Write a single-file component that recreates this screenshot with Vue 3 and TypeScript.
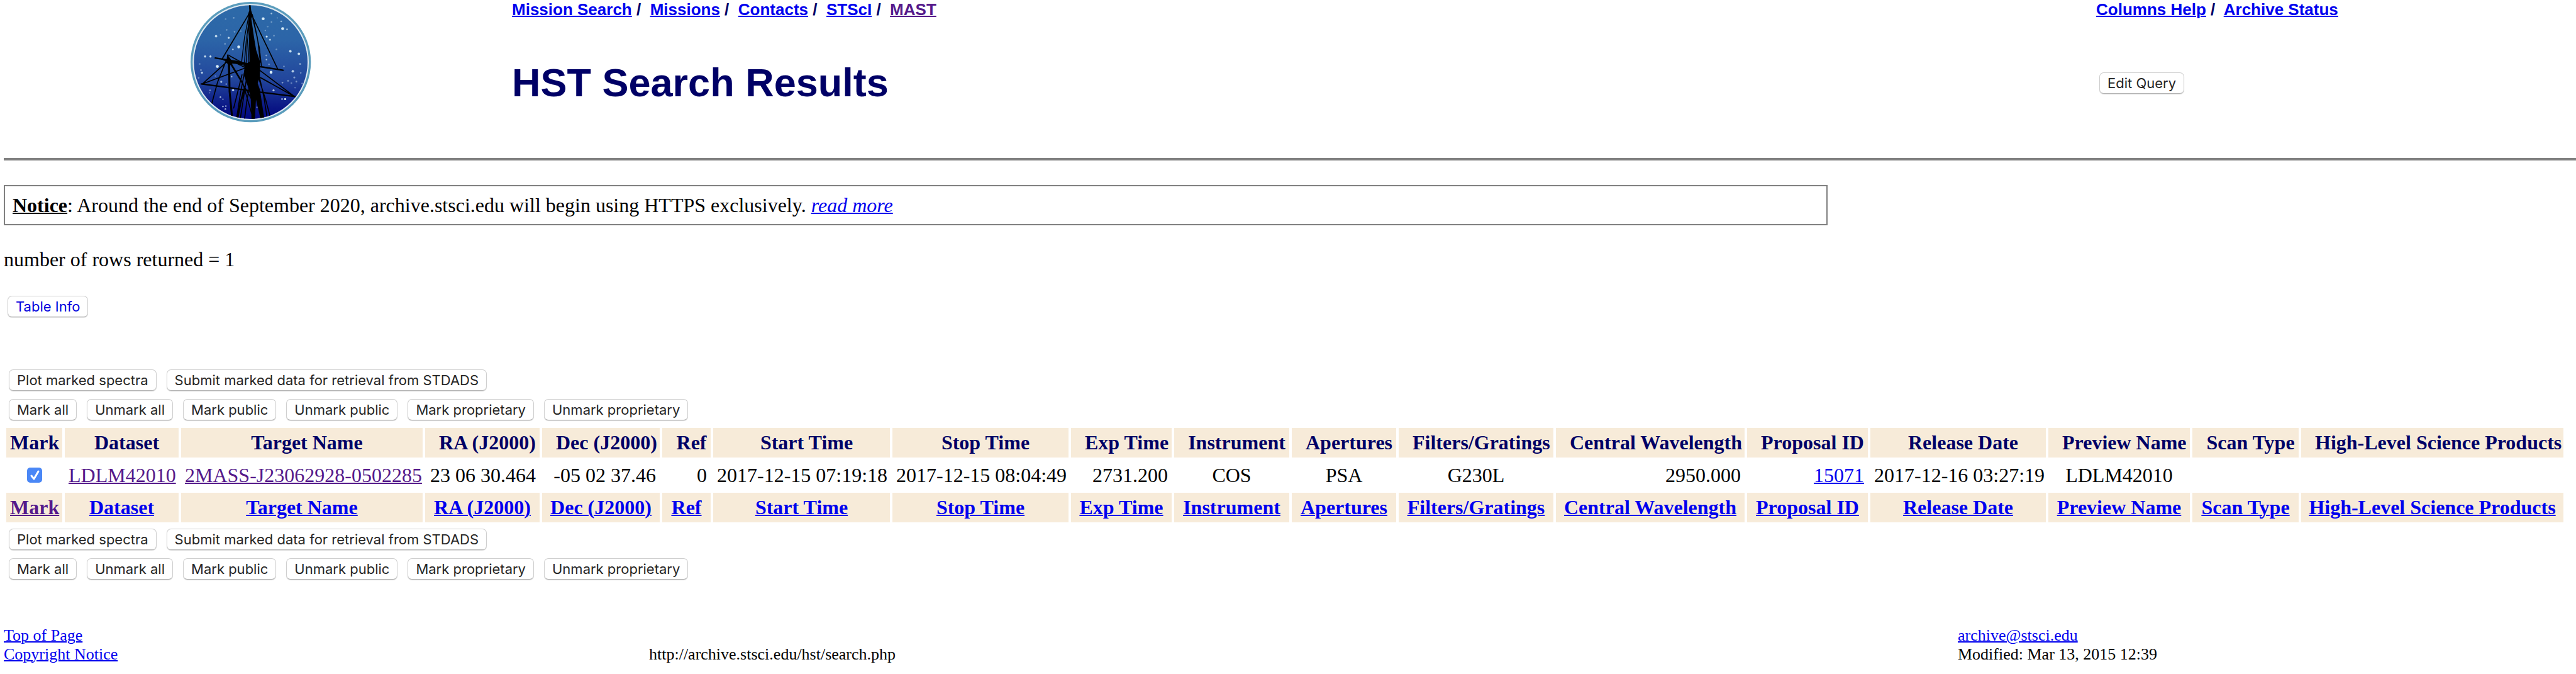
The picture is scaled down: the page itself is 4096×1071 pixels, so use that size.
<script setup lang="ts">
import { ref } from 'vue'

interface Column {
  label: string
  width: number
  value: string
  align: 'left' | 'center' | 'right'
  link?: 'visited' | 'fresh'
}

const columns: Column[] = [
  { label: 'Dataset', width: 181, value: 'LDLM42010', align: 'left', link: 'visited' },
  { label: 'Target Name', width: 384, value: '2MASS-J23062928-0502285', align: 'left', link: 'visited' },
  { label: 'RA (J2000)', width: 182, value: '23 06 30.464', align: 'right' },
  { label: 'Dec (J2000)', width: 187, value: '-05 02 37.46', align: 'right' },
  { label: 'Ref', width: 77, value: '0', align: 'right' },
  { label: 'Start Time', width: 281, value: '2017-12-15 07:19:18', align: 'left' },
  { label: 'Stop Time', width: 280, value: '2017-12-15 08:04:49', align: 'left' },
  { label: 'Exp Time', width: 160, value: '2731.200', align: 'right' },
  { label: 'Instrument', width: 183, value: 'COS', align: 'center' },
  { label: 'Apertures', width: 166, value: 'PSA', align: 'center' },
  { label: 'Filters/Gratings', width: 246, value: 'G230L', align: 'center' },
  { label: 'Central Wavelength', width: 300, value: '2950.000', align: 'right' },
  { label: 'Proposal ID', width: 192, value: '15071', align: 'right', link: 'fresh' },
  { label: 'Release Date', width: 279, value: '2017-12-16 03:27:19', align: 'left' },
  { label: 'Preview Name', width: 225, value: 'LDLM42010', align: 'center' },
  { label: 'Scan Type', width: 169, value: '', align: 'center' },
  { label: 'High-Level Science Products', width: 417, value: '', align: 'center' },
]

const marked = ref(true)
const submitActions = ['Plot marked spectra', 'Submit marked data for retrieval from STDADS']
const markActions = ['Mark all', 'Unmark all', 'Mark public', 'Unmark public', 'Mark proprietary', 'Unmark proprietary']

function runMark(action: string) {
  marked.value = action.startsWith('Mark')
}

// x, y, radius, opacity
const stars: number[][] = [
  [428, 90, 7, 1], [522, 138, 7, 1], [543, 141, 4, 0.7], [468, 65, 4, 0.7], [515, 103, 4, 0.6], [468, 106, 4, 0.4],
  [496, 86, 3, 0.4], [286, 86, 4, 0.4], [247, 92, 4, 0.3], [252, 144, 4, 0.4], [201, 174, 6, 0.8], [222, 168, 3, 0.5],
  [262, 182, 5, 0.9], [310, 226, 7, 1], [282, 238, 4, 0.7], [244, 211, 4, 0.4], [290, 153, 4, 0.4], [320, 150, 4, 0.3],
  [445, 176, 5, 0.9], [461, 191, 5, 0.7], [480, 172, 4, 0.4], [450, 128, 4, 0.3], [438, 147, 3, 0.5], [492, 238, 4, 0.4],
  [559, 247, 6, 0.9], [600, 259, 6, 0.9], [606, 308, 4, 0.6], [571, 343, 6, 0.8], [609, 351, 4, 0.4], [443, 267, 4, 0.5],
  [444, 287, 4, 0.7], [528, 320, 4, 0.4], [466, 348, 7, 1], [148, 272, 5, 0.9], [174, 272, 5, 0.9], [207, 320, 7, 1],
  [122, 308, 4, 0.3], [133, 350, 5, 0.8], [128, 337, 4, 0.5], [117, 375, 4, 0.4], [226, 394, 5, 0.7], [276, 369, 4, 0.7],
  [198, 366, 4, 0.3], [283, 434, 5, 0.9], [250, 405, 4, 0.4], [172, 435, 4, 0.5], [170, 447, 3, 0.4], [222, 468, 4, 0.7],
  [234, 478, 4, 0.4], [234, 513, 4, 0.6], [248, 511, 4, 0.6], [246, 525, 4, 0.7], [478, 435, 5, 0.8], [519, 477, 4, 0.7],
  [534, 477, 5, 1], [548, 389, 5, 0.4], [578, 373, 5, 0.5], [564, 400, 4, 0.4], [588, 393, 4, 0.5], [616, 402, 4, 0.4],
  [582, 422, 4, 0.3], [521, 398, 4, 0.5], [398, 517, 4, 0.4], [456, 310, 4, 0.4],
]
</script>

<template>
  <div class="page">
    <header class="masthead">
      <a class="logo" href="#mast" aria-label="MAST">
        <svg viewBox="75 0 585 600" aria-hidden="true">
          <defs>
            <linearGradient id="sky" x1="0" y1="0" x2="0" y2="1">
              <stop offset="0" stop-color="#2d6aa8" />
              <stop offset="0.3" stop-color="#2c65a8" />
              <stop offset="0.65" stop-color="#22469c" />
              <stop offset="0.9" stop-color="#0a1685" />
              <stop offset="1" stop-color="#020880" />
            </linearGradient>
            <clipPath id="porthole"><circle cx="368" cy="299" r="274" /></clipPath>
          </defs>
          <circle cx="368" cy="299" r="290" fill="#5a9cbc" />
          <circle cx="368" cy="299" r="280" fill="#dfe9f1" />
          <circle cx="368" cy="299" r="274" fill="url(#sky)" />
          <g clip-path="url(#porthole)">
            <circle
              v-for="(s, i) in stars"
              :key="i"
              :cx="s[0]"
              :cy="s[1]"
              :r="s[2]"
              :opacity="s[3]"
              fill="#d8ecf6"
            />
            <g fill="none" stroke="#000" stroke-linecap="round">
              <path
                stroke-width="5"
                d="M360 66 L230 284 M370 66 L498 332 M258 264 L330 304 M262 290 L135 404 M135 404 L340 328 M400 330 L578 464 M400 366 L578 464 M420 376 L565 458 M248 296 L208 396 L180 500 M258 270 L266 440 L276 560"
              />
              <path stroke-width="7" d="M197 279 L300 296 L420 322 L524 338 M130 404 L250 420 L400 442 L582 465" />
              <path
                stroke-width="4"
                d="M360 70 L338 180 L324 300 M362 80 L346 200 L336 320 M364 90 L352 200 L344 340 M376 70 L400 180 L414 300 M378 90 L410 230 L420 320 M368 80 L356 300 M238 290 L400 330 M256 284 L350 330"
              />
              <path
                stroke-width="5"
                d="M262 286 L330 400 L372 545 M266 300 L345 430 L385 500 M340 340 L320 440 L300 570 M352 350 L335 460 L318 570 M366 400 L350 480 L338 575 M326 360 L306 440 L286 520 M398 350 L440 480 L460 555 M410 370 L432 470 L446 560"
              />
              <path stroke-width="9" d="M264 290 L266 440 L278 560 M388 400 L410 500 L428 572 M336 430 L318 500 L304 570" />
            </g>
            <path d="M359 20 H367 L370 50 L378 74 L371 90 L384 180 L394 240 L414 300 L412 370 L398 410 L392 500 L388 580 H372 L368 470 L352 410 L334 360 L340 312 L362 296 L360 180 L362 90 L354 72 L361 50 Z" fill="#000" />
            <path d="M255 262 L275 290 L350 304 L346 312 L280 306 L265 318 L250 300 Z" fill="#000" />
            <path d="M394 380 L412 430 L434 575 L416 575 L384 440 Z" fill="#000" />
          </g>
        </svg>
      </a>
      <div>
        <nav class="links">
          <a href="#search">Mission Search</a>&nbsp;/&nbsp; <a href="#missions">Missions</a>&nbsp;/&nbsp;
          <a href="#contacts">Contacts</a>&nbsp;/&nbsp; <a href="#stsci">STScI</a>&nbsp;/&nbsp;
          <a href="#mast" class="visited">MAST</a>
        </nav>
        <h1>HST Search Results</h1>
      </div>
      <div>
        <nav class="links">
          <a href="#help">Columns Help</a>&nbsp;/&nbsp; <a href="#status">Archive Status</a>
        </nav>
        <button type="button" class="edit">Edit Query</button>
      </div>
    </header>

    <hr />

    <main>
      <p class="notice">
        <b>Notice</b>: Around the end of September 2020, archive.stsci.edu will begin using HTTPS exclusively.
        <a href="#more"><i>read more</i></a>
      </p>
      <p class="count">number of rows returned = 1</p>
      <button type="button" class="info">Table Info</button>

      <form @submit.prevent>
        <div class="actions submit">
          <button v-for="a in submitActions" :key="a" type="button">{{ a }}</button>
        </div>
        <div class="actions">
          <button v-for="a in markActions" :key="a" type="button" @click="runMark(a)">{{ a }}</button>
        </div>

        <table>
          <colgroup>
            <col :style="{ width: '89px' }" />
            <col v-for="c in columns" :key="c.label" :style="{ width: c.width + 'px' }" />
          </colgroup>
          <thead>
            <tr>
              <th scope="col" class="mark">Mark</th>
              <th v-for="c in columns" :key="c.label" scope="col">{{ c.label }}</th>
            </tr>
          </thead>
          <tbody>
            <tr>
              <td class="center"><input v-model="marked" type="checkbox" aria-label="Mark LDLM42010" /></td>
              <td v-for="c in columns" :key="c.label" :class="c.align">
                <a v-if="c.link" :href="'#' + c.value" :class="{ visited: c.link === 'visited' }">{{ c.value }}</a>
                <template v-else>{{ c.value }}</template>
              </td>
            </tr>
          </tbody>
          <tfoot>
            <tr>
              <th><a href="#mark" class="visited">Mark</a></th>
              <th v-for="c in columns" :key="c.label"><a href="#column">{{ c.label }}</a></th>
            </tr>
          </tfoot>
        </table>

        <div class="actions submit">
          <button v-for="a in submitActions" :key="a" type="button">{{ a }}</button>
        </div>
        <div class="actions">
          <button v-for="a in markActions" :key="a" type="button" @click="runMark(a)">{{ a }}</button>
        </div>
      </form>
    </main>

    <footer>
      <div><a href="#top">Top of Page</a><br /><a href="#copyright">Copyright Notice</a></div>
      <div>http://archive.stsci.edu/hst/search.php</div>
      <div><a href="#mail">archive@stsci.edu</a><br />Modified: Mar 13, 2015 12:39</div>
    </footer>
  </div>
</template>

<style>
body {
  margin: 0;
  background: #fff;
}
</style>

<style scoped>
.page {
  padding-left: 6px;
  color: #000;
  font: 32px/38px 'Liberation Serif', 'Times New Roman', serif;
}

a {
  color: #0000ee;
  text-decoration: underline;
  text-decoration-thickness: 2px;
}

a.visited {
  color: #551a8b;
}

.masthead {
  display: grid;
  grid-template-columns: 784fr 2495fr 763fr;
  column-gap: 24px;
  font-family: 'Liberation Sans', Arial, sans-serif;
}

.logo {
  justify-self: center;
  height: 198px;
}

.logo svg {
  display: block;
  width: 193px;
  height: 198px;
}

.links {
  color: #000066;
  font-size: 26px;
  font-weight: bold;
  line-height: 30px;
  white-space: nowrap;
}

h1 {
  margin: 65px 0 0;
  color: #000066;
  font-size: 63px;
  line-height: 72px;
}

hr {
  height: 4px;
  margin: 53px 0 39px;
  border: 0;
  background: #808080;
}

main {
  margin-right: 6px;
}

.notice {
  box-sizing: border-box;
  width: 71%;
  margin: 0;
  padding: 11px 12px;
  border: 2px solid #808080;
}

.notice b {
  text-decoration: underline;
  text-decoration-thickness: 2px;
}

.count {
  margin: 35px 0 39px;
}

button {
  display: block;
  box-sizing: border-box;
  height: 34px;
  padding: 0 12px;
  border: 1px solid #cfcfcf;
  border-bottom-color: #b4b4b4;
  border-radius: 7px;
  background: #fff;
  box-shadow: 0 1px 1px #d8d8d8;
  color: #262626;
  font: 22px/32px Inter, 'Helvetica Neue', sans-serif;
  white-space: nowrap;
}

.edit {
  margin: 85px 0 0 5px;
}

.info {
  margin-left: 6px;
  color: #0000dd;
}

form {
  margin-top: 83px;
}

.actions {
  display: flex;
  gap: 16px;
  margin: 0 0 8px 8px;
}

.actions.submit {
  margin-bottom: 13px;
}

table {
  table-layout: fixed;
  width: calc(100% - 10px);
  margin-bottom: 6px;
  border-spacing: 4px;
}

th,
td {
  box-sizing: border-box;
  height: 47px;
  padding: 0 6px;
  line-height: 37px;
  white-space: nowrap;
}

td {
  height: 48px;
}

th {
  background: #f7ebd9;
  text-align: center;
}

thead th {
  padding-left: 22px;
  color: #000066;
}

thead .mark {
  padding-left: 6px;
}

.left {
  text-align: left;
}

.center {
  text-align: center;
}

.right {
  text-align: right;
}

input {
  display: block;
  width: 24px;
  height: 24px;
  margin: 0 auto;
  border-radius: 5px;
  appearance: none;
  box-shadow: inset 0 0 0 1px #b4b4b4;
}

input:checked {
  background: #4a87f6 url("data:image/svg+xml,%3Csvg xmlns='http://www.w3.org/2000/svg' viewBox='0 0 24 24'%3E%3Cpath d='M7 13l4 5 7-12' fill='none' stroke='white' stroke-width='3' stroke-linecap='round' stroke-linejoin='round'/%3E%3C/svg%3E");
  box-shadow: none;
}

footer {
  display: grid;
  grid-template-columns: 1026fr 2081fr 983fr;
  align-items: end;
  margin-top: 74px;
  padding-bottom: 16px;
  font-size: 26px;
  line-height: 30px;
}
</style>
